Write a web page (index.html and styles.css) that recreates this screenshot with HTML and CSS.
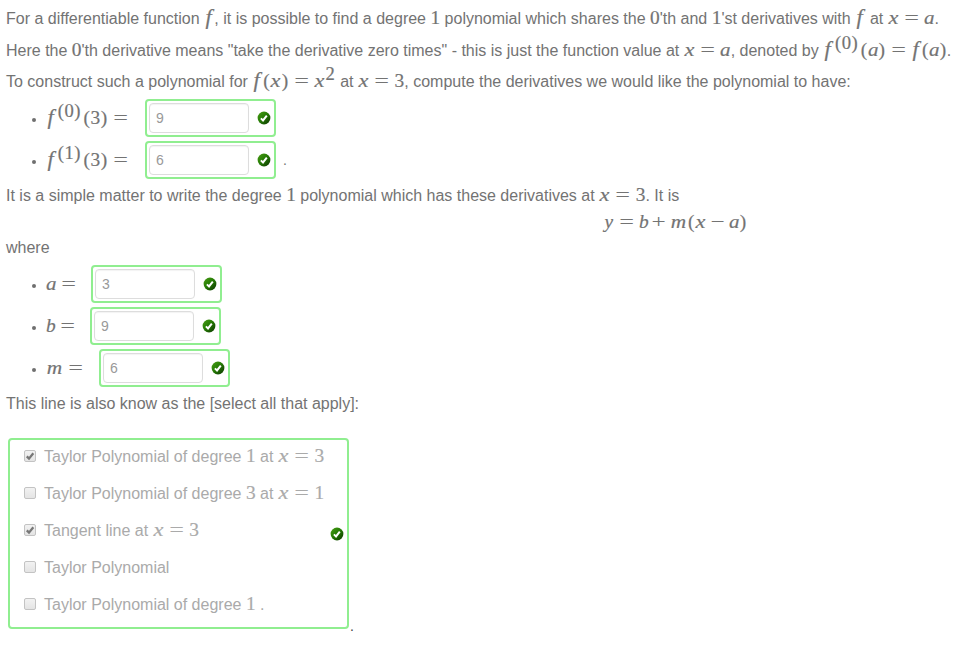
FILE: index.html
```html
<!DOCTYPE html>
<html lang="en">
<head>
<meta charset="utf-8">
<title>Tangent line and Taylor polynomial</title>
<link rel="stylesheet" href="styles.css">
</head>
<body>
<svg class="defs" width="0" height="0" aria-hidden="true">
  <defs>
    <linearGradient id="g" x1="0" y1="0" x2="1" y2="1"><stop offset="0" stop-color="#4a9d16"/><stop offset=".45" stop-color="#267d05"/><stop offset="1" stop-color="#0c3500"/></linearGradient>
    <symbol id="ok" viewBox="0 0 14 14"><circle cx="7" cy="7" r="6.4" fill="url(#g)"/><path d="M3.9 7.4 6 9.4 9.8 4.6" fill="none" stroke="#fff" stroke-width="2"/></symbol>
    <symbol id="tick" viewBox="0 0 12 12"><path d="M2.8 6.4 5 8.6 9.3 3.2" fill="none" stroke="#777" stroke-width="2.3"/></symbol>
  </defs>
</svg>
<main>
  <p class="line l1">For a differentiable function <span class="math"><i class="f">f</i></span>, it is possible to find a degree <span class="math"><b>1</b></span> polynomial which shares the <span class="math"><b>0</b></span>'th and <span class="math"><b>1</b></span>'st derivatives with <span class="math"><i class="f">f</i></span> at <span class="math"><i class="x">x</i><b class="eq">=</b><i class="a">a</i></span>.</p>
  <p class="line l2">Here the <span class="math"><b>0</b></span>'th derivative means "take the derivative zero times" - this is just the function value at <span class="math"><i class="x">x</i><b class="eq">=</b><i class="a">a</i></span>, denoted by <span class="math"><i class="f">f</i><span class="sup"><b class="p">(</b><b>0</b><b class="p">)</b></span><b class="p">(</b><i class="a">a</i><b class="p">)</b><b class="eq">=</b><i class="f">f</i><b class="p">(</b><i class="a">a</i><b class="p">)</b></span>.</p>
  <p class="line l3">To construct such a polynomial for <span class="math"><i class="f">f</i><b class="p">(</b><i class="x">x</i><b class="p">)</b><b class="eq">=</b><i class="x">x</i><span class="sup two"><b>2</b></span></span> at <span class="math"><i class="x">x</i><b class="eq">=</b><b>3</b></span>, compute the derivatives we would like the polynomial to have:</p>
  <ul class="answers">
    <li><span class="math lab wide"><i class="f">f</i><span class="sup"><b class="p">(</b><b>0</b><b class="p">)</b></span><b class="p">(</b><b>3</b><b class="p">)</b><b class="eq">=</b></span><span class="box"><span class="field">9</span><svg class="ok"><use href="#ok"/></svg></span></li>
    <li><span class="math lab wide"><i class="f">f</i><span class="sup"><b class="p">(</b><b>1</b><b class="p">)</b></span><b class="p">(</b><b>3</b><b class="p">)</b><b class="eq">=</b></span><span class="box"><span class="field">6</span><svg class="ok"><use href="#ok"/></svg></span><span class="stop">.</span></li>
  </ul>
  <p class="line l4">It is a simple matter to write the degree <span class="math"><b>1</b></span> polynomial which has these derivatives at <span class="math"><i class="x">x</i><b class="eq">=</b><b>3</b></span>. It is</p>
  <p class="line formula"><span class="math"><i class="y">y</i><b class="eq">=</b><i class="bb">b</i><b class="op">+</b><i class="m">m</i><b class="p">(</b><i class="x">x</i><b class="op">−</b><i class="a">a</i><b class="p">)</b></span></p>
  <p class="line where">where</p>
  <ul class="answers">
    <li><span class="math lab la"><i class="a">a</i><b class="eq">=</b></span><span class="box"><span class="field">3</span><svg class="ok"><use href="#ok"/></svg></span></li>
    <li><span class="math lab lb"><i class="bb">b</i><b class="eq">=</b></span><span class="box"><span class="field">9</span><svg class="ok"><use href="#ok"/></svg></span></li>
    <li><span class="math lab lm"><i class="m">m</i><b class="eq">=</b></span><span class="box"><span class="field">6</span><svg class="ok"><use href="#ok"/></svg></span></li>
  </ul>
  <p class="line last">This line is also know as the [select all that apply]:</p>
  <div class="choice-row">
    <div class="choices">
      <div class="options">
        <div class="option"><span class="check"><svg><use href="#tick"/></svg></span><span>Taylor Polynomial of degree <span class="math"><b>1</b></span> at <span class="math"><i class="x">x</i><b class="eq">=</b><b>3</b></span></span></div>
        <div class="option"><span class="check"></span><span>Taylor Polynomial of degree <span class="math"><b>3</b></span> at <span class="math"><i class="x">x</i><b class="eq">=</b><b>1</b></span></span></div>
        <div class="option"><span class="check"><svg><use href="#tick"/></svg></span><span>Tangent line at <span class="math"><i class="x">x</i><b class="eq">=</b><b>3</b></span></span></div>
        <div class="option"><span class="check"></span><span>Taylor Polynomial</span></div>
        <div class="option"><span class="check"></span><span>Taylor Polynomial of degree <span class="math"><b>1</b></span> .</span></div>
      </div>
      <svg class="ok"><use href="#ok"/></svg>
    </div>
    <span class="end">.</span>
  </div>
</main>
</body>
</html>
```
FILE: styles.css
```css
* { box-sizing: border-box; }
body { margin: 0; background: #fff; color: #737373; font: 16px/26px "Liberation Sans", Arial, sans-serif; min-height: 646px; }
.defs { display: block; width: 0; height: 0; }
main { padding: 3px 0 0 6px; width: 960px; }
p, ul { margin: 0; padding: 0; }
.line { white-space: nowrap; height: 32px; line-height: 32px; }
.l2 { height: 31px; }
.l3 { height: 33px; }
.l4, .formula, .where { height: 26px; line-height: 26px; }
.formula { padding-left: 598px; line-height: 28px; }
.last { height: 47px; line-height: 26px; }

.math { font-family: "Liberation Serif", "Times New Roman", serif; font-size: 19.4px; line-height: 0; white-space: nowrap; -webkit-text-stroke: .2px currentColor; }
.math b, .math i { display: inline-block; font-weight: normal; width: .5em; text-align: center; line-height: 0; }
.math .f { width: .53em; text-indent: -.04em; transform: scale(1.15, 1.05); }
.math .x { width: .572em; transform: scaleX(1.15); }
.math .a { width: .529em; transform: scaleX(1.08); }
.math .y { width: .49em; }
.math .bb { width: .429em; }
.math .m { width: .878em; transform: scaleX(1.1); }
.math .p { width: .389em; }
.math .eq { width: .778em; margin: 0 .27em; transform: scaleX(1.35); -webkit-text-stroke: 0; }
.math .op { width: .778em; margin: 0 .205em; transform: scaleX(1.3); -webkit-text-stroke: 0; }
.sup { font-size: 18.6px; position: relative; top: -7px; margin: 0 2px 0 1px; }
.sup.two { margin: 0 1px 0 0; }

.answers { list-style: none; display: flex; flex-direction: column; gap: 4px; padding: 0 0 4px 26px; }
.where + .answers { padding-top: 4px; }
.answers li { display: flex; align-items: center; height: 38px; }
.answers li::before { content: ""; width: 4px; height: 4px; border-radius: 50%; background: #6f6f6f; margin: 4px 10px 0 0; }
.lab { line-height: 30px; height: 30px; flex: none; }
.lab.wide { width: 99px; }
.la { width: 45px; }
.lb { width: 44px; }
.lm { width: 53px; }
.box { width: 131px; height: 38px; border: 2px solid #90ee90; border-radius: 4px; display: flex; align-items: center; padding-left: 2px; }
.field { width: 100px; height: 30px; border: 1px solid #ddd; border-radius: 4px; font-size: 14px; line-height: 29px; padding-left: 6px; color: #999; box-shadow: inset 0 1px 1px rgba(0,0,0,.05); }
.ok { width: 14px; height: 14px; flex: none; margin-left: 8px; }
.stop { font-size: 14px; margin-left: 7px; }

.choice-row { display: flex; align-items: flex-end; padding-left: 2px; }
.choices { width: 341px; height: 191px; border: 2px solid #90ee90; border-radius: 4px; display: flex; align-items: center; color: #aaa; }
.choices .ok { margin-left: 7px; }
.options { width: 313px; padding-left: 14px; height: 187px; padding-top: 4px; }
.option { height: 37px; line-height: 26px; display: flex; white-space: nowrap; }
.check { width: 12px; height: 12px; border: 1px solid #c3c3c3; border-radius: 2px; background: linear-gradient(#f2f2f2, #e4e4e4); margin: 6px 8px 0 0; display: block; flex: none; }
.check svg { width: 12px; height: 12px; display: block; margin: -1px; }
.end { color: #444; font-size: 14px; line-height: 14px; height: 14px; margin: 0 0 -4px 1px; }
```
